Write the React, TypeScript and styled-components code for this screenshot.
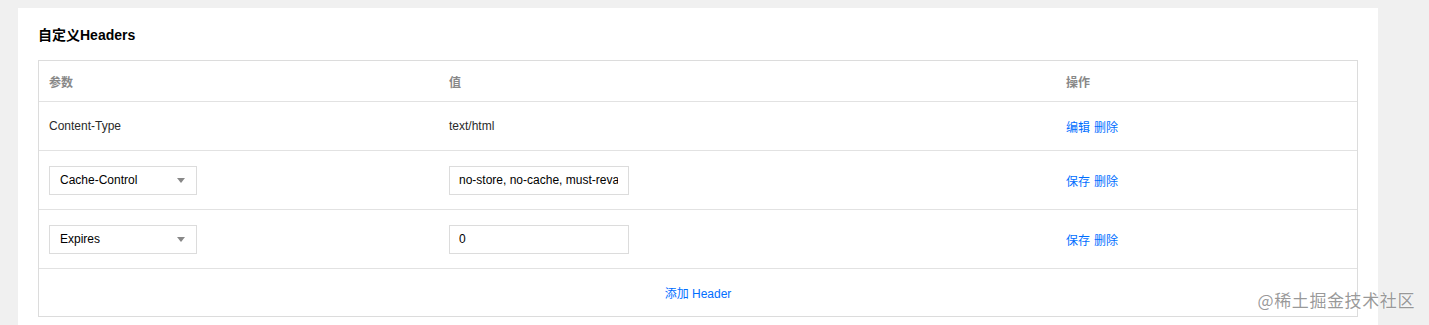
import styled, { createGlobalStyle } from "styled-components";

const GlobalStyle = createGlobalStyle`
  html, body {
    margin: 0;
    padding: 0;
    background: #f0f0f0;
    font-family: "Liberation Sans", "Noto Sans CJK SC", sans-serif;
    font-size: 12px;
    color: #333;
  }
`;

const Page = styled.div`
  position: relative;
  height: 325px;
  overflow: hidden;
  padding: 8px 0 0 18px;
  box-sizing: border-box;
`;

const Card = styled.div`
  width: 1360px;
  height: 400px;
  background: #fff;
  padding: 17px 20px 0;
  box-sizing: border-box;
`;

const Title = styled.h3`
  margin: 0 0 15px;
  font-size: 14px;
  line-height: 20px;
  font-weight: bold;
  color: #000;
`;

const Table = styled.div`
  border: 1px solid #dcdcdc;
  width: 1320px;
  box-sizing: border-box;
`;

interface RowProps {
  h: number;
  first?: boolean;
}
const Row = styled.div<RowProps>`
  display: grid;
  grid-template-columns: 400px 617px 1fr;
  align-items: center;
  height: ${(p) => p.h}px;
  border-top: ${(p) => (p.first ? "none" : "1px solid #e2e2e2")};
  box-sizing: border-box;
`;

const Cell = styled.div`
  padding-left: 10px;
  color: #2a2a2a;
`;

const HeadCell = styled(Cell)`
  color: #888;
  font-weight: bold;
`;

const AddRow = styled.div`
  height: 48px;
  border-top: 1px solid #e2e2e2;
  display: flex;
  align-items: center;
  justify-content: center;
  box-sizing: border-box;
`;

const Link = styled.a`
  color: #006eff;
  cursor: pointer;
  text-decoration: none;
  & + & {
    margin-left: 4px;
  }
`;

const Select = styled.div`
  width: 148px;
  height: 29px;
  border: 1px solid #dcdcdc;
  box-sizing: border-box;
  display: flex;
  align-items: center;
  justify-content: space-between;
  padding: 0 10px;
  color: #000;
`;

const Caret = styled.span`
  width: 0;
  height: 0;
  border-left: 4px solid transparent;
  border-right: 4px solid transparent;
  border-top: 5px solid #888;
  margin-right: 1px;
`;

const Input = styled.input`
  width: 180px;
  height: 29px;
  border: 1px solid #dcdcdc;
  box-sizing: border-box;
  padding: 0 10px 0 9px;
  font-family: inherit;
  font-size: 12px;
  color: #000;
  outline: none;
`;

const Watermark = styled.div`
  position: absolute;
  right: 14px;
  bottom: 13px;
  font-size: 17px;
  letter-spacing: 0.6px;
  color: rgba(120, 120, 120, 0.75);
  text-shadow: 0 0 2px #fff;
  font-family: "Noto Sans CJK SC", sans-serif;
`;

const editRows = [
  { key: "Cache-Control", value: "no-store, no-cache, must-revalidate" },
  { key: "Expires", value: "0" },
];

export default function App() {
  return (
    <Page>
      <GlobalStyle />
      <Card>
        <Title>自定义Headers</Title>
        <Table>
          <Row h={40} first>
            <HeadCell>参数</HeadCell>
            <HeadCell>值</HeadCell>
            <HeadCell>操作</HeadCell>
          </Row>
          <Row h={49}>
            <Cell>Content-Type</Cell>
            <Cell>text/html</Cell>
            <Cell>
              <Link>编辑</Link>
              <Link>删除</Link>
            </Cell>
          </Row>
          {editRows.map((r) => (
            <Row h={59} key={r.key}>
              <Cell>
                <Select>
                  <span>{r.key}</span>
                  <Caret />
                </Select>
              </Cell>
              <Cell>
                <Input defaultValue={r.value} />
              </Cell>
              <Cell>
                <Link>保存</Link>
                <Link>删除</Link>
              </Cell>
            </Row>
          ))}
          <AddRow>
            <Link>添加 Header</Link>
          </AddRow>
        </Table>
      </Card>
      <Watermark>@稀土掘金技术社区</Watermark>
    </Page>
  );
}
